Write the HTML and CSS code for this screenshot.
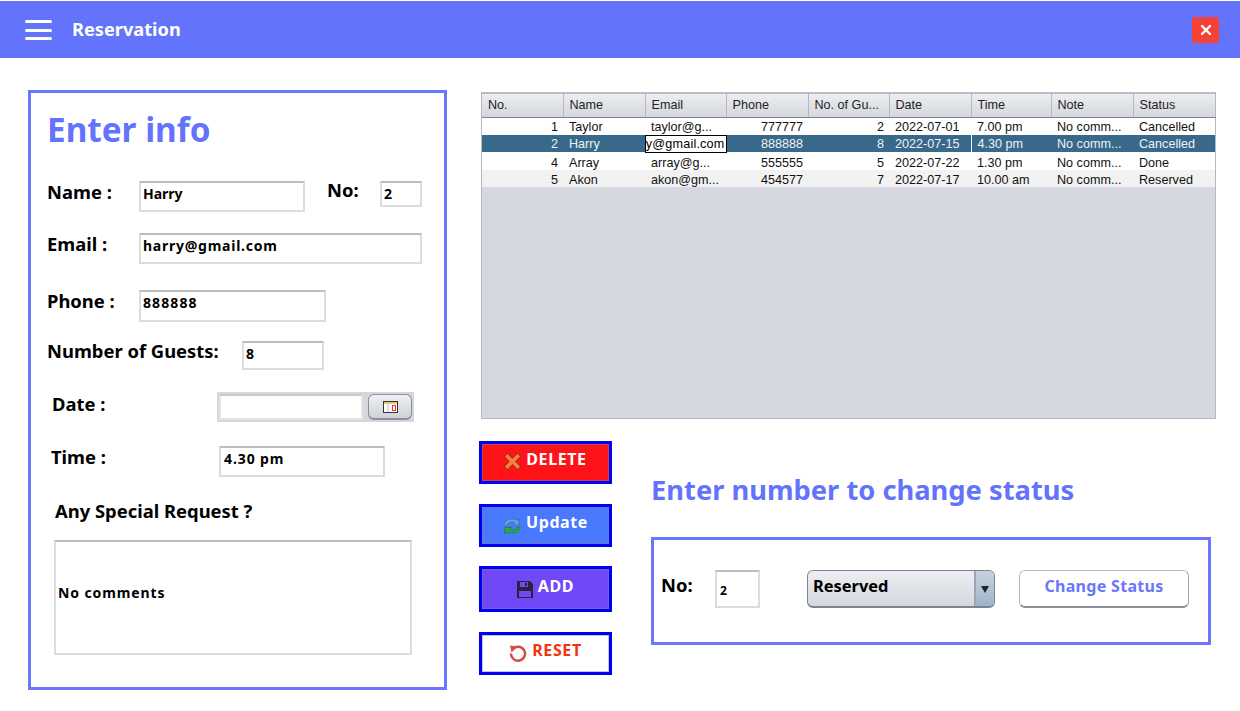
FILE: index.html
```html
<!DOCTYPE html>
<html lang="en">
<head>
<meta charset="utf-8">
<title>Reservation</title>
<link rel="stylesheet" href="styles.css">
</head>
<body>
<header class="topbar">
  <div class="burger"><span></span><span></span><span></span></div>
  <div class="app-title">Reservation</div>
  <div class="close"><svg width="12" height="12" viewBox="0 0 12 12"><path d="M2 2l8 8M10 2l-8 8" stroke="#fff" stroke-width="2.4" stroke-linecap="round"/></svg></div>
</header>
<main class="main">
  <section class="info">
    <h1 class="info-title">Enter info</h1>
    <div class="row row-name">
      <div class="label w92">Name :</div>
      <div class="field f-name">Harry</div>
      <div class="label no-label">No:</div>
      <div class="field f-no">2</div>
    </div>
    <div class="row row-email">
      <div class="label w92">Email :</div>
      <div class="field f-email">harry@gmail.com</div>
    </div>
    <div class="row row-phone">
      <div class="label w92">Phone :</div>
      <div class="field f-phone">888888</div>
    </div>
    <div class="row row-guests">
      <div class="label w195 lab-guests">Number of Guests:</div>
      <div class="field f-guests">8</div>
    </div>
    <div class="row row-date">
      <div class="label w164 ind6 lab-date">Date :</div>
      <div class="datebox">
        <div class="field f-date"></div>
        <div class="datebtn">
          <svg width="15" height="12" viewBox="0 0 15 12"><rect x=".5" y=".5" width="14" height="11" fill="#fff" stroke="#333"/><rect x="1" y="1" width="13" height="2" fill="#e6c877"/><path d="M5 3v8" stroke="#bbb"/><rect x="9.5" y="4.5" width="3" height="5" fill="none" stroke="#e33"/></svg>
        </div>
      </div>
    </div>
    <div class="row row-time">
      <div class="label w168 ind4">Time :</div>
      <div class="field f-time">4.30 pm</div>
    </div>
    <div class="label row-any">Any Special Request ?</div>
    <div class="field f-request">No comments</div>
  </section>

  <section class="side">
    <div class="table-wrap">
      <table class="grid">
        <thead>
          <tr><th>No.</th><th>Name</th><th>Email</th><th>Phone</th><th>No. of Gu...</th><th>Date</th><th>Time</th><th>Note</th><th>Status</th></tr>
        </thead>
        <tbody>
          <tr><td class="num">1</td><td>Taylor</td><td>taylor@g...</td><td class="num">777777</td><td class="num">2</td><td>2022-07-01</td><td>7.00 pm</td><td>No comm...</td><td>Cancelled</td></tr>
          <tr class="sel"><td class="num">2</td><td>Harry</td><td class="focus">y@gmail.com</td><td class="num">888888</td><td class="num">8</td><td>2022-07-15</td><td class="divider">4.30 pm</td><td>No comm...</td><td>Cancelled</td></tr>
          <tr class="third"><td class="num">4</td><td>Array</td><td>array@g...</td><td class="num">555555</td><td class="num">5</td><td>2022-07-22</td><td>1.30 pm</td><td>No comm...</td><td>Done</td></tr>
          <tr class="alt"><td class="num">5</td><td>Akon</td><td>akon@gm...</td><td class="num">454577</td><td class="num">7</td><td>2022-07-17</td><td>10.00 am</td><td>No comm...</td><td>Reserved</td></tr>
        </tbody>
      </table>
    </div>
    <div class="lower">
      <div class="actions">
        <div class="btn btn-delete">
          <svg class="ico-delete" width="17" height="17" viewBox="0 0 17 17"><path d="M3.500 3.500l10 10M13.500 3.500l-10 10" stroke="#8a2c10" stroke-width="5.200" stroke-linecap="square"/><path d="M3.500 3.500l10 10M13.500 3.500l-10 10" stroke="#f5803f" stroke-width="3.800" stroke-linecap="square"/></svg>
          <span>DELETE</span>
        </div>
        <div class="btn btn-update">
          <svg width="18" height="18" viewBox="0 0 18 18"><path d="M1 9c0-5 4-7 8-7 2 0 4 .5 5 1.500L16 2v6h-6l2-2c-2-1.500-7-1.500-8 3z" fill="#5ba6dc" stroke="#2a6a96" stroke-width=".6"/><path d="M17 10c-.5 4.500-4 6-8 6-2 0-4-.5-5-1.500L2 17v-6.500h6.500l-2 2c2 1.500 7 1.500 8-2.500z" fill="#28b828" stroke="#0b7a14" stroke-width=".6"/></svg>
          <span>Update</span>
        </div>
        <div class="btn btn-add">
          <svg width="16" height="17" viewBox="0 0 16 17"><path d="M0 0h13l3 3v14H0z" fill="#2a2438"/><rect x="3" y="1" width="8" height="5" fill="#7048f8"/><rect x="8" y="2" width="2" height="3" fill="#2a2438"/><rect x="2" y="10" width="12" height="6" fill="#7048f8"/></svg>
          <span>ADD</span>
        </div>
        <div class="btn btn-reset">
          <svg class="ico-reset" width="18" height="18" viewBox="0 0 18 18"><path d="M4.200 4.600A7 7 0 1 1 2 9.500" fill="none" stroke="#d84a48" stroke-width="2.500"/><path d="M1 1.500l7.500 1L2.500 8.500z" fill="#d84a48"/></svg>
          <span>RESET</span>
        </div>
      </div>
      <div class="status">
        <h2 class="status-title">Enter number to change status</h2>
        <div class="status-box">
          <div class="label status-no">No:</div>
          <div class="field f-statusno">2</div>
          <div class="combo">
            <div class="combo-text">Reserved</div>
            <div class="combo-arrow"><svg width="8" height="8" viewBox="0 0 8 8"><path d="M0 1h8L4 8z" fill="#222"/></svg></div>
          </div>
          <div class="change">Change Status</div>
        </div>
      </div>
    </div>
  </section>
</main>
</body>
</html>
```
FILE: styles.css
```css
* { box-sizing: border-box; }
html, body { margin: 0; height: 100%; }
body {
  background: #fff;
  overflow: hidden;
  font-family: "Noto Sans", "Open Sans", sans-serif;
  color: #000;
}

.topbar {
  margin-top: 1px;
  height: 57px;
  background: #6473fb;
  display: flex;
  align-items: center;
  padding: 0 21px 0 25px;
  color: #fff;
}
.burger { width: 27px; display: flex; flex-direction: column; gap: 5.5px; margin-top: 1px; }
.burger span { display: block; height: 3px; background: #fff; border-radius: 2px; }
.app-title { margin-left: 20px; font-size: 18.2px; font-weight: 700; flex: 1; margin-top: -1px; }
.close {
  width: 27px; height: 26px; background: #f44336; border-radius: 3px;
  display: flex; align-items: center; justify-content: center;
}

.main { display: flex; padding: 32px 28px 0; gap: 32px; align-items: flex-start; }

.info {
  width: 419px; height: 600px;
  border: 3px solid #6a76fd;
  padding: 16px 0 0;
  flex: none;
}
.info-title {
  margin: 0 0 0 16px;
  height: 40px; line-height: 40px;
  font-size: 33.3px; font-weight: 700; color: #6473fb;
}
.row { display: flex; align-items: flex-start; }
.label { font-size: 18.4px; font-weight: 700; line-height: 22px; flex: none; }
.field {
  flex: none;
  border: 2px solid #dcdcdc;
  border-top-color: #bdbdbd;
  background: #fff;
  font-size: 14px; font-weight: 700;
  line-height: 22px;
  padding-left: 2px;
}
.row-name { margin: 32px 0 0 16px; }
.row-email { margin: 21px 0 0 16px; }
.row-phone { margin: 26px 0 0 16px; }
.row-guests { margin: 19px 0 0 16px; }
.row-date { margin: 22px 0 0 16px; }
.row-time { margin: 24px 0 0 16px; }
.row-any { margin: 23px 0 0 24px; }
.w92 { width: 92px; }
.w195 { width: 195px; }
.w164 { width: 170px; }
.w168 { width: 172px; }
.ind6 { padding-left: 5px; }
.ind4 { padding-left: 4px; }
.lab-date { margin-top: 1px; }
.lab-guests { margin-top: -1px; }
.no-label { margin: -2px 0 0 22px; width: 53px; }
.f-name { width: 166px; height: 31px; }
.f-no { width: 42px; height: 26px; }
.f-email { width: 283px; height: 31px; letter-spacing: .75px; }
.f-phone { width: 187px; height: 32px; line-height: 21px; letter-spacing: 1.1px; }
.f-guests { width: 82px; height: 29px; line-height: 21px; }
.f-time { width: 166px; height: 31px; padding-left: 3px; letter-spacing: .9px; }
.f-request {
  margin: 18px 0 0 23px;
  width: 358px; height: 115px;
  display: flex; align-items: center;
  padding-bottom: 10px;
  letter-spacing: .9px;
}
.datebox {
  width: 197px; height: 30px;
  background: #d5d7dd;
  padding: 2px;
  display: flex; justify-content: space-between;
  flex: none;
}
.f-date { width: 144px; height: 26px; border-color: #e4e4e4; border-top-color: #c8c8c8; }
.datebtn {
  width: 44px; height: 26px;
  border: 1px solid #8a8f99; border-bottom-width: 2px;
  border-radius: 6px;
  background: linear-gradient(#eef0f3, #cfd2d8);
  display: flex; align-items: center; justify-content: center;
}

.side { width: 737px; flex: none; }
.table-wrap {
  margin: 2px 0 0 2px;
  width: 735px; height: 327px;
  background: #d5d8e0;
  border: 1px solid #b4b8c0;
  border-top: 2px solid #b9bdc5;
}
.grid {
  table-layout: fixed;
  width: 733px;
  border-collapse: collapse;
  font-family: "Liberation Sans", Arial, sans-serif;
  font-size: 12.6px;
}
.grid th {
  height: 23px; padding: 0 0 0 6px;
  font-weight: 400; text-align: left; color: #222;
  background: linear-gradient(#eceef1, #d3d6dc);
  border-right: 1px solid #b4b8c2;
  border-bottom: 1px solid #7f858f;
  width: 82px;
}
.grid th:first-child { width: 81px; }
.grid th:nth-child(3), .grid th:nth-child(5) { width: 81px; }
.grid th:nth-child(7) { width: 80px; }
.grid th:nth-child(9) { width: 82px; }
.grid td {
  height: 18px; padding: 2px 5px 0 6px;
  white-space: nowrap; overflow: hidden;
  background: #fff; color: #111;
  line-height: 14px;
}
.grid tbody tr:nth-child(even) td { height: 17px; }
.grid td.num { text-align: right; }
.grid tr.third td { padding-top: 3px; }
.grid tr.alt td { background: #f2f2f2; }
.grid tr.sel td { background: #39698a; color: #eef2f5; padding-top: 1px; }
.grid tbody tr.sel td.focus {
  background: #fff; color: #000;
  border: 1px solid #000; padding: 0 1px 0 0;
  text-align: right; letter-spacing: .2px;
}
.grid tr.sel td.divider { border-left: 1px solid #fff; }

.lower { display: flex; margin-top: 22px; }
.actions { width: 133px; flex: none; display: flex; flex-direction: column; gap: 20px; }
.btn {
  width: 133px; height: 43px;
  border: 3px solid #0000f5;
  display: flex; align-items: center; justify-content: center; gap: 5px;
  font-size: 16px; font-weight: 700; color: #fff;
  letter-spacing: .6px;
  box-shadow: inset 0 0 0 1px rgba(130,130,130,.45);
}
.btn span { margin-top: -8px; }
.btn-delete { background: #fe1418; }
.ico-delete { margin-top: -2px; }
.btn-update { background: #4a78ff; }
.btn-add { background: #7048f8; height: 46px; margin-top: -1px; }
.btn-add span { margin-top: -6px; }
.btn-reset { background: #fff; color: #f2330d; }
.ico-reset { margin-top: -1px; }

.status { margin: 26px 0 0 39px; width: 560px; }
.status-title {
  margin: 0;
  height: 46px; line-height: 46px;
  font-size: 27.3px; font-weight: 700; color: #6473fb;
  white-space: nowrap;
}
.status-box {
  margin-top: 24px;
  width: 560px; height: 108px;
  border: 3px solid #6a76fd;
  display: flex; align-items: flex-start;
  padding: 30px 0 0 7px;
}
.status-no { width: 54px; margin-top: 4px; }
.f-statusno {
  width: 45px; height: 38px;
  display: flex; align-items: center;
  padding-top: 4px; padding-left: 3px;
  font-size: 12px;
}
.combo {
  margin-left: 47px;
  width: 188px; height: 38px;
  border: 1px solid #7b8391; border-bottom-width: 2px;
  border-radius: 6px;
  display: flex; overflow: hidden;
  background: linear-gradient(#eceef1, #d4d7dd);
}
.combo-text { flex: 1; font-size: 16.4px; font-weight: 700; padding: 3px 0 0 5px; line-height: 24px; }
.combo-arrow {
  width: 20px;
  border-left: 2px solid #9aa6b4;
  background: linear-gradient(#c6d3df, #9fb4c8);
  display: flex; align-items: center; justify-content: center;
}
.change {
  margin-left: 24px;
  width: 170px; height: 38px;
  border: 1px solid #b8bcc4; border-bottom: 2px solid #8b8f98; border-right-color: #a0a4ac;
  border-radius: 6px;
  background: #fff;
  color: #6a76fd;
  font-size: 16px; font-weight: 700;
  display: flex; align-items: center; justify-content: center;
  padding-bottom: 6px;
  letter-spacing: .3px;
}
```
